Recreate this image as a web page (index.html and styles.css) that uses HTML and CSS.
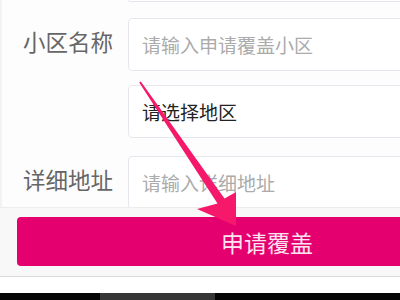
FILE: index.html
```html
<!DOCTYPE html>
<html lang="zh-CN">
<head>
<meta charset="utf-8">
<title>申请覆盖</title>
<link rel="stylesheet" href="styles.css">
</head>
<body>
<div class="page">
  <div class="form">
    <div class="stub"></div>
    <div class="row row-first">
      <div class="label">小区名称</div>
      <div class="field placeholder">请输入申请覆盖小区</div>
    </div>
    <div class="row row-second">
      <div class="label"></div>
      <div class="field value">请选择地区</div>
    </div>
    <div class="row row-third">
      <div class="label">详细地址</div>
      <div class="field placeholder">请输入详细地址</div>
    </div>
  </div>
  <div class="footer">
    <div class="btn">申请覆盖</div>
  </div>
  <div class="spacer"></div>
  <div class="taskbar"><div class="seg"></div></div>
</div>
<svg class="arrow" width="400" height="300" viewBox="0 0 400 300">
  <polygon points="140.8,81.4 224.5,198.5 236,192 236,226 197,209 217.5,203.5 139.2,82.6" fill="#f5186b"/>
</svg>
</body>
</html>
```

FILE: styles.css
```css
html, body {
  margin: 0;
  padding: 0;
}
body {
  width: 400px;
  height: 300px;
  overflow: hidden;
  position: relative;
  background: #ffffff;
  font-family: "Noto Sans CJK SC", "Noto Sans", sans-serif;
}
.page {
  width: 400px;
  overflow: hidden;
}
.form {
  height: 207px;
  overflow: hidden;
  background: #fdfdfd;
  border-left: 2px solid #f3f3f3;
  box-sizing: border-box;
}
.stub {
  margin-left: 126px;
  width: 400px;
  height: 1px;
  border: 1px solid #e4e8ed;
  border-top: none;
  border-radius: 0 0 4px 4px;
  background: #fff;
}
.row {
  display: flex;
  align-items: center;
}
.row-first { margin-top: 16px; }
.row-second { margin-top: 14px; }
.row-third { margin-top: 18px; }
.label {
  width: 126px;
  flex: none;
  box-sizing: border-box;
  padding-left: 21px;
  font-size: 22.5px;
  color: #666;
  line-height: 1;
  margin-top: -6px;
}
.field {
  flex: none;
  width: 420px;
  height: 53px;
  box-sizing: border-box;
  border: 1px solid #e4e8ed;
  border-radius: 4px;
  background: #fff;
  padding-left: 13px;
  display: flex;
  align-items: center;
  font-size: 19px;
}
.placeholder { color: #ababab; }
.value { color: #222; }
.footer {
  height: 70px;
  box-sizing: border-box;
  background: #f8f8f8;
  border-top: 1px solid #ededed;
  border-bottom: 1px solid #d9d9d9;
  padding: 9px 0 0 17px;
}
.btn {
  width: 500px;
  height: 49px;
  background: #e4006f;
  border-radius: 4px;
  color: #fde4f0;
  font-size: 23px;
  display: flex;
  align-items: center;
  justify-content: center;
}
.spacer {
  height: 16px;
  background: #fff;
}
.taskbar {
  height: 7px;
  background: #050505;
  display: flex;
}
.seg {
  margin-left: 100px;
  width: 115px;
  background: #363636;
}
.arrow {
  position: absolute;
  left: 0;
  top: 0;
}
```
